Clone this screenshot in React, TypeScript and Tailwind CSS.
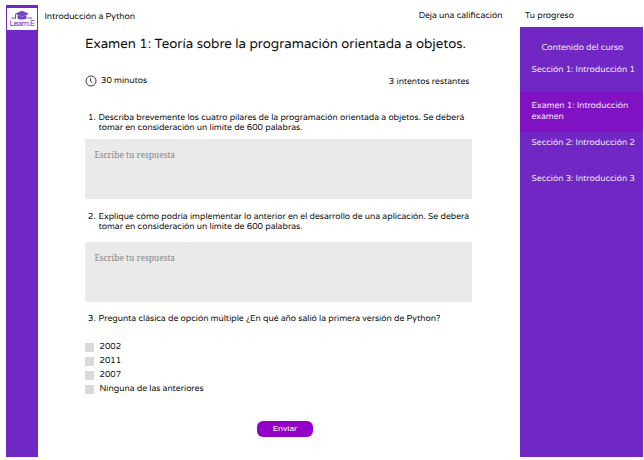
import React from "react";

const options = ["2002", "2011", "2007", "Ninguna de las anteriores"];

function Logo() {
  return (
    <div className="mx-px mt-[3px] flex h-[22px] flex-col items-center bg-white text-[#7444c4]">
      <svg viewBox="0 0 30 12" className="h-[12px] w-[30px]" fill="currentColor">
        <path d="M15 2.8 22 5.8 15 8.8 8 5.8Z" />
        <path d="M10.5 7 15 8.8 19.5 7v3.8q-4.5 1.4-9 0Z" />
        <path d="M9 6.2v4.6H8V6.2ZM4.5 9.6H9v1H4.5ZM20.5 9.6H25v1h-4.5Z" />
      </svg>
      <span className="whitespace-nowrap text-[8.2px] font-light leading-[8px] tracking-[-0.65px]">Learn.E</span>
    </div>
  );
}

function Question({ number, lines }: { number: number; lines: string[] }) {
  return (
    <div className="flex whitespace-nowrap pl-[3px] leading-[10px]">
      <span className="w-[10.5px] shrink-0">{number}.</span>
      <div>
        {lines.map((line) => (
          <p key={line}>{line}</p>
        ))}
      </div>
    </div>
  );
}

function Answer() {
  return (
    <textarea
      placeholder="Escribe tu respuesta"
      className="block h-[60px] w-[387px] resize-none bg-[#eaeaea] px-[9.5px] pt-[11px] font-['Noto_Serif','Liberation_Serif',serif] text-[8.4px] leading-[10px] tracking-normal outline-none placeholder:text-[#858585]"
    />
  );
}

export default function App() {
  return (
    <div className="flex h-[460px] w-[644px] overflow-hidden bg-white pl-[6px] font-['Varela_Round','Noto_Sans',sans-serif] text-[8.62px] leading-[10px] text-[#111111] [text-rendering:geometricPrecision]">
      <aside className="mt-[5px] h-[452px] w-8 shrink-0 bg-[#7127c3]">
        <Logo />
      </aside>
      <div className="w-[482px] shrink-0">
        <header className="flex h-[27px] justify-between whitespace-nowrap pl-[6.5px] pr-[17.5px]">
          <span className="pt-[12px]">Introducción a Python</span>
          <span className="pt-[11px]">Deja una calificación</span>
        </header>
        <main className="pl-[47px]">
          <h1 className="h-[47px] whitespace-nowrap pt-[9px] text-[13.27px] leading-4">
            Examen 1: Teoría sobre la programación orientada a objetos.
          </h1>
          <div className="flex h-[39px] w-[384.5px] justify-between">
            <div className="flex gap-[4px]">
              <svg viewBox="0 0 12 12" className="mt-px size-3" fill="none" stroke="#222222" strokeWidth="0.9">
                <circle cx="6" cy="6" r="5" />
                <path d="M5.6 3.2v3l1.7 1.8" />
              </svg>
              <span className="pt-[2px]">30 minutos</span>
            </div>
            <span className="pt-[2.5px]">3 intentos restantes</span>
          </div>
          <Question
            number={1}
            lines={["Describa brevemente los cuatro pilares de la programación orientada a objetos. Se deberá", "tomar en consideración un límite de 600 palabras."]}
          />
          <div className="h-[6px]" />
          <Answer />
          <div className="h-[12.5px]" />
          <Question
            number={2}
            lines={["Explique cómo podría implementar lo anterior en el desarrollo de una aplicación. Se deberá", "tomar en consideración un límite de 600 palabras."]}
          />
          <div className="h-[10.5px]" />
          <Answer />
          <div className="h-[12px]" />
          <Question number={3} lines={["Pregunta clásica de opción múltiple ¿En qué año salió la primera versión de Python?"]} />
          <div className="flex flex-col gap-[4px] pt-[18px]">
            {options.map((option) => (
              <label key={option} className="flex h-[10px]">
                <input type="checkbox" className="mt-px size-[9px] appearance-none bg-[#d9d9d9]" />
                <span className="ml-[5.5px] whitespace-nowrap">{option}</span>
              </label>
            ))}
          </div>
          <button className="ml-[172px] mt-[27px] block h-4 w-14 rounded-[6px] bg-[#9400c8] pb-[2px] text-[8.3px] leading-[10px] text-white">
            Enviar
          </button>
        </main>
      </div>
      <aside className="w-[123px] shrink-0 whitespace-nowrap">
        <div className="h-[27px] pl-[5px] pt-[11px]">Tu progreso</div>
        <nav className="h-[430px] bg-[#7127c3] pt-[16px] text-[#eee5f8]">
          <h2 className="pl-[21.5px]">Contenido del curso</h2>
          <div className="h-[39px] pl-[11.5px] pt-[12px]">Sección 1: Introducción 1</div>
          <div className="h-[40px] bg-[#8112c4] pl-[11.5px] pt-[9px] leading-[10.6px]">
            Examen 1: Introducción
            <br />
            examen
          </div>
          <div className="h-[36px] pl-[11.5px] pt-[6px]">Sección 2: Introducción 2</div>
          <div className="pl-[11.5px] pt-[6px]">Sección 3: Introducción 3</div>
        </nav>
      </aside>
    </div>
  );
}
